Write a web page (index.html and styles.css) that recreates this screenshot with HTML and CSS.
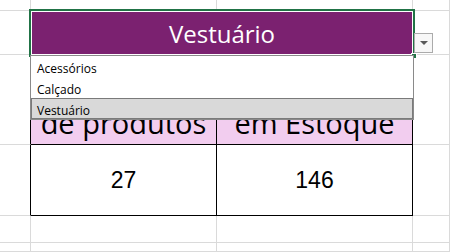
FILE: index.html
```html
<!DOCTYPE html>
<html lang="pt">
  <head>
    <meta charset="UTF-8" />
    <title>Planilha - Estoque</title>
    <link rel="stylesheet" href="styles.css">
  </head>
  <body>
    <div class="sheet">
      <!-- linha 1 -->
      <div class="cell"></div>
      <div class="cell"></div>
      <div class="cell"></div>
      <div class="cell"></div>

      <!-- linha 2: categoria selecionada -->
      <div class="cell"></div>
      <div class="cell title">
        Vestuário
        <span class="handle"></span>
      </div>
      <div class="cell"></div>

      <!-- linha 3: cabeçalho (parte de cima fica sob a lista) -->
      <div class="cell edge"></div>
      <div class="cell head">de produtos</div>
      <div class="cell head">em Estoque</div>
      <div class="cell"></div>

      <!-- linha 4: valores -->
      <div class="cell edge"></div>
      <div class="cell value">27</div>
      <div class="cell value">146</div>
      <div class="cell"></div>

      <!-- linhas vazias -->
      <div class="cell"></div>
      <div class="cell"></div>
      <div class="cell"></div>
      <div class="cell"></div>
      <div class="cell"></div>
      <div class="cell"></div>
      <div class="cell"></div>
      <div class="cell"></div>

      <!-- lista de validação -->
      <div class="drop-btn"><span class="arrow"></span></div>
      <ul class="drop-list">
        <li>Acessórios</li>
        <li>Calçado</li>
        <li class="active">Vestuário</li>
      </ul>
    </div>
  </body>
</html>
```

FILE: styles.css
```css
* {
  margin: 0;
  padding: 0;
  box-sizing: border-box;
}

body {
  width: 450px;
  height: 252px;
  overflow: hidden;
  background: #fff;
  font-family: 'Open Sans', 'Noto Sans', sans-serif;
}

.sheet {
  position: relative;
  display: grid;
  grid-template-columns: 31px 186px 196px 1fr;
  grid-template-rows: 11px 44px 90px 71px 27px 1fr;
  height: 252px;
}

.cell {
  border-right: 1px solid #dadada;
  border-bottom: 1px solid #dadada;
}
.cell.edge {
  border-right-color: #000;
}

.title {
  grid-column: span 2;
  position: relative;
  display: flex;
  align-items: center;
  justify-content: center;
  border: none;
  background: #7b2170;
  color: #fff;
  font-size: 24px;
  box-shadow: inset 0 0 0 1px #fff;
  outline: 2px solid #217346;
}
.handle {
  position: absolute;
  right: -4px;
  bottom: -4px;
  width: 6px;
  height: 6px;
  background: #217346;
  border: 1px solid #fff;
}

.head {
  display: flex;
  flex-direction: column;
  justify-content: flex-end;
  align-items: center;
  padding-bottom: 4px;
  background: #f2cdef;
  border-right-color: #000;
  border-bottom-color: #000;
  font-size: 29px;
  line-height: 34px;
  color: #000;
  text-align: center;
}

.value {
  display: flex;
  align-items: center;
  justify-content: center;
  border-right-color: #000;
  border-bottom-color: #000;
  font-family: 'Liberation Sans', Arial, sans-serif;
  font-size: 23px;
  color: #000;
}

.drop-btn {
  position: absolute;
  left: 414px;
  top: 33px;
  width: 19px;
  height: 20px;
  display: flex;
  align-items: center;
  justify-content: center;
  background: #f7f7f7;
  border: 1px solid #ababab;
}
.arrow {
  width: 0;
  height: 0;
  border-left: 4px solid transparent;
  border-right: 4px solid transparent;
  border-top: 4px solid #595959;
}

.drop-list {
  position: absolute;
  left: 30px;
  top: 55px;
  width: 384px;
  list-style: none;
  background: #fff;
  border: 1px solid #8a8a8a;
  font-size: 12px;
  color: #000;
}
.drop-list li {
  height: 21px;
  line-height: 21px;
  padding: 2px 0 0 6px;
}
.drop-list li.active {
  background: #d9d9d9;
  border: 1px solid #7a7a7a;
  padding-left: 5px;
  padding-top: 1px;
}
```
